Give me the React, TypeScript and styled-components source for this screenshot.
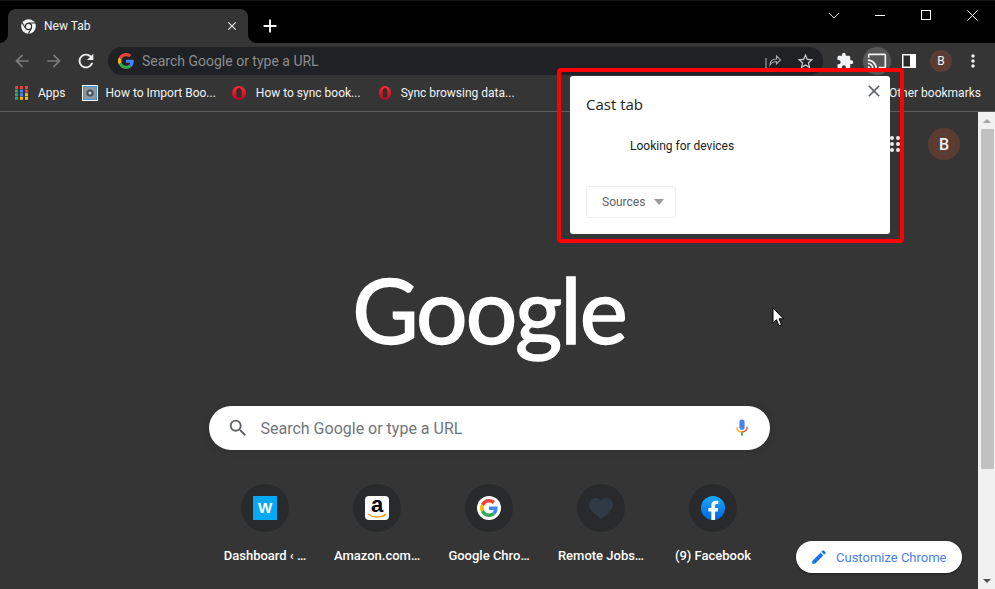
import React from "react";
import styled, { createGlobalStyle } from "styled-components";
import { MdArrowBack, MdArrowForward, MdRefresh, MdClose, MdExtension, MdCast, MdStarBorder, MdMoreVert, MdSearch, MdEdit, MdAdd } from "react-icons/md";

const Global = createGlobalStyle`
  html, body { margin: 0; padding: 0; background: #353535; }
  * { box-sizing: border-box; }
`;
const Shell = styled.div`
  position: relative; width: 995px; height: 589px; overflow: hidden;
  display: flex; flex-direction: column; background: #353535;
  font-family: Roboto, "Liberation Sans", sans-serif; color: #fff;
`;
const TitleBar = styled.div`
  height: 43px; flex: none; background: #000; border-top: 1px solid #141414;
  display: flex; align-items: flex-end; padding-left: 8px;
`;
const Tab = styled.div`
  position: relative; width: 240px; height: 34px; background: #353535;
  border-radius: 8px 8px 0 0; display: flex; align-items: center;
  padding: 0 9px 0 13px; gap: 8px;
  &::before, &::after { content: ""; position: absolute; bottom: 0; width: 8px; height: 8px; }
  &::before { left: -8px; background: radial-gradient(circle at 0 0, #000 7.5px, #353535 8px); }
  &::after { right: -8px; background: radial-gradient(circle at 100% 0, #000 7.5px, #353535 8px); }
`;
const TabTitle = styled.span`
  flex: 1; font: 12px Roboto, sans-serif; color: #f1f3f4;
`;
const NewTab = styled.div`
  margin-left: 8px; height: 34px; width: 28px; display: flex; align-items: center; justify-content: center; color: #fff;
`;
const WinControls = styled.div`
  margin-left: auto; align-self: flex-start; display: flex; color: #fff; padding-top: 6px;
`;
const WinBtn = styled.div`
  width: 46px; height: 16px; display: flex; align-items: center; justify-content: center;
`;
const Toolbar = styled.div`
  height: 36px; flex: none; display: flex; align-items: center; padding: 0 6px; background: #353535;
`;
const NavBtn = styled.div<{ $dim?: boolean }>`
  width: 32px; height: 28px; display: flex; align-items: center; justify-content: center;
  color: ${p => (p.$dim ? "#7b7c7d" : "#f1f3f4")};
`;
const Omnibox = styled.div`
  flex: 1; height: 28px; margin: 0 6px; background: #202124; border-radius: 14px;
  display: flex; align-items: center; padding: 0 2px 0 10px; gap: 8px;
`;
const OmniText = styled.span`
  flex: 1; font-size: 14px; color: #8b8c8e;
`;
const OmniIcon = styled.div`
  width: 32px; height: 28px; display: flex; align-items: center; justify-content: center; color: #c8c9ca; margin-left: -8px;
`;
const ToolIcon = styled.div<{ $active?: boolean }>`
  width: 32px; height: 28px; display: flex; align-items: center; justify-content: center; position: relative; color: #f1f3f4;
  &::before {
    content: ""; position: absolute; left: 2px; top: 0; width: 28px; height: 28px; border-radius: 50%;
    background: ${p => (p.$active ? "#565656" : "transparent")};
  }
  & > * { position: relative; }
`;
const MiniAvatar = styled.div`
  width: 22px; height: 22px; border-radius: 50%; background: #5c3d33; color: #f1f3f4;
  font-size: 12px; font-family: Roboto, sans-serif; display: flex; align-items: center; justify-content: center;
`;
const Bookmarks = styled.div`
  height: 33px; flex: none; display: flex; align-items: center; padding: 0 14px 4px 15px; gap: 16px;
  border-bottom: 1px solid #5e5e5e; background: #353535;
`;
const Bookmark = styled.div<{ $end?: boolean; $gap?: number }>`
  display: flex; align-items: center; gap: ${p => p.$gap ?? 8}px; font: 12px Roboto, sans-serif; color: #f1f3f4; white-space: nowrap;
  ${p => p.$end && "margin-left: auto;"}
`;
const Body = styled.div`
  flex: 1; display: flex; min-height: 0;
`;
const Page = styled.div`
  flex: 1; display: flex; flex-direction: column; align-items: center; position: relative; background: #353535;
`;
const TopRow = styled.div`
  align-self: stretch; height: 64px; padding: 16px 18px 0 0; display: flex; justify-content: flex-end; align-items: flex-start; gap: 28px;
`;
const GridIcon = styled.div`
  margin-top: 8px;
  width: 16px; height: 16px; display: grid; grid-template-columns: repeat(3, 4px); grid-auto-rows: 4px; gap: 2px;
  & > i { background: #e8eaed; border-radius: 50%; }
`;
const Avatar = styled.div`
  width: 32px; height: 32px; border-radius: 50%; background: #5c3d33; color: #f1f3f4;
  font: 500 16px Roboto, sans-serif; display: flex; align-items: center; justify-content: center;
`;
const Logo = styled.div`
  margin-top: 86px; height: 113px; font: 400 91px/94px Lato, sans-serif; letter-spacing: -2px; color: #fff;
  -webkit-text-stroke: 1.5px #fff;
`;
const SearchBox = styled.div`
  margin-top: 31px; width: 561px; height: 44px; background: #fff; border-radius: 22px; flex: none;
  display: flex; align-items: center; padding: 0 22px 0 18px; gap: 12px;
  color: #5f6368; box-shadow: 0 1px 6px rgba(32,33,36,.28);
`;
const SearchText = styled.span`
  flex: 1; font-size: 16px; color: #70757a;
`;
const Shortcuts = styled.div`
  margin-top: 34px; display: flex;
`;
const Tile = styled.div`
  width: 112px; display: flex; flex-direction: column; align-items: center;
`;
const TileCircle = styled.div`
  width: 48px; height: 48px; border-radius: 50%; background: #292a2b; display: flex; align-items: center; justify-content: center;
`;
const TileLabel = styled.div`
  margin-top: 15px; font: 500 13px/18px Roboto, sans-serif; color: #fff; text-align: center; white-space: nowrap;
`;
const WIcon = styled.div`
  width: 24px; height: 24px; background: #03a9f4; color: #fff; font: 700 15px/24px "Liberation Sans", sans-serif; text-align: center;
`;
const AmazonIcon = styled.div`
  width: 24px; height: 24px; background: #fff; border-radius: 4px; position: relative; color: #000;
  font: 700 22px/18px "Liberation Sans", sans-serif; text-align: center;
  & > svg { position: absolute; left: 2px; bottom: 1px; }
`;
const GIconWrap = styled.div`
  width: 24px; height: 24px; background: #fff; border-radius: 50%; display: flex; align-items: center; justify-content: center;
`;
const Customize = styled.div`
  position: absolute; left: 796px; top: 541px; width: 166px; height: 32px; border-radius: 16px; background: #fff;
  box-shadow: 0 1px 3px rgba(0,0,0,.4); display: flex; align-items: center; padding-left: 14px; gap: 8px;
  font: 400 13px Roboto, sans-serif; color: #4a7ff0;
  & > svg { color: #1a73e8; }
`;
const Scrollbar = styled.div`
  width: 17px; flex: none; background: #f1f1f1; display: flex; flex-direction: column; align-items: center;
`;
const ScrollArrow = styled.div<{ $down?: boolean }>`
  height: 17px; flex: none; display: flex; align-items: center; justify-content: center;
  &::after { content: ""; border-left: 4px solid transparent; border-right: 4px solid transparent;
    ${p => (p.$down ? "border-top: 4px solid #505050;" : "border-bottom: 4px solid #a3a3a3;")} }
`;
const ScrollThumb = styled.div`
  width: 13px; margin-left: 1px; height: 340px; background: #c1c1c1; flex: none;
`;
const ScrollSpace = styled.div`
  flex: 1;
`;
const Highlight = styled.div`
  position: absolute; left: 557px; top: 68px; width: 347px; height: 175px; border: 4px solid #fe0000; border-radius: 4px; pointer-events: none;
`;
const Popup = styled.div`
  position: absolute; left: 570px; top: 76px; width: 320px; height: 158px; background: #fff; border-radius: 3px;
  padding: 0 16px; display: flex; flex-direction: column; color: #202124;
`;
const PopupClose = styled.div`
  position: absolute; right: 6px; top: 5px; color: #5f6368; display: flex;
`;
const PopupTitle = styled.div`
  margin-top: 19px; font: 15px/18px "Open Sans", sans-serif; color: #202124;
`;
const PopupStatus = styled.div`
  margin-top: 25px; padding-left: 44px; font: 12px/16px Roboto, sans-serif; color: #202124;
`;
const SourcesBtn = styled.div`
  margin-top: 32px; width: 90px; height: 32px; border: 1px solid #eeeeee; border-radius: 3px;
  display: flex; align-items: center; padding-left: 15px; gap: 9px; font: 12px Roboto, sans-serif; color: #5f6368;
  &::after { content: ""; border-left: 5px solid transparent; border-right: 5px solid transparent; border-top: 6px solid #9a9a9a; }
`;
const Cursor = styled.svg`
  position: absolute; left: 772px; top: 307px;
`;

const GoogleG = ({ size }: { size: number }) => (
  <svg width={size} height={size} viewBox="0 0 48 48">
    <path fill="#EA4335" d="M24 9.5c3.54 0 6.71 1.22 9.21 3.6l6.85-6.85C35.9 2.38 30.47 0 24 0 14.62 0 6.51 5.38 2.56 13.22l7.98 6.19C12.43 13.72 17.74 9.5 24 9.5z" />
    <path fill="#4285F4" d="M46.98 24.55c0-1.57-.15-3.09-.38-4.55H24v9.02h12.94c-.58 2.96-2.26 5.48-4.78 7.18l7.73 6c4.51-4.18 7.09-10.36 7.09-17.65z" />
    <path fill="#FBBC05" d="M10.53 28.59c-.48-1.45-.76-2.99-.76-4.59s.27-3.14.76-4.59l-7.98-6.19C.92 16.46 0 20.12 0 24c0 3.88.92 7.54 2.56 10.78l7.97-6.19z" />
    <path fill="#34A853" d="M24 48c6.48 0 11.93-2.13 15.89-5.81l-7.73-6c-2.15 1.45-4.92 2.3-8.16 2.3-6.26 0-11.57-4.22-13.47-9.91l-7.98 6.19C6.51 42.62 14.62 48 24 48z" />
  </svg>
);
const Opera = ({ narrow }: { narrow?: boolean }) => (
  <svg width="14" height="14" viewBox="0 0 14 14">
    <defs>
      <linearGradient id="opera" x1="0" y1="0" x2="0" y2="1">
        <stop offset="0" stopColor="#ff2a38" />
        <stop offset="1" stopColor="#b00c1c" />
      </linearGradient>
    </defs>
    <ellipse cx={narrow ? 8 : 7} cy="7" rx={narrow ? 6 : 7} ry="7" fill="url(#opera)" />
    <ellipse cx={narrow ? 8 : 7} cy="7" rx={narrow ? 2.4 : 2.8} ry="5" fill="#3a2a2c" />
  </svg>
);
const ChromeIcon = () => (
  <svg width="15" height="15" viewBox="0 0 16 16">
    <circle cx="8" cy="8" r="7.8" fill="#f6f7f8" />
    <circle cx="8" cy="8" r="3.9" fill="#2a2a2a" />
    <circle cx="8" cy="8" r="2.7" fill="#f6f7f8" />
    <path d="M8 4.300H14.800M4.800 9.900L1.300 4M11.200 9.900L7.700 15.700" stroke="#2a2a2a" strokeWidth="1.100" fill="none" />
  </svg>
);
const AppsGrid = () => (
  <svg width="13" height="14" viewBox="0 0 13 14">
    {[
      ["#ea4335", "#ea4335", "#ea4335"], ["#34a853", "#4285f4", "#ea4335"],
      ["#34a853", "#4285f4", "#fbbc05"], ["#34a853", "#fbbc05", "#fbbc05"],
    ].map((r, y) => r.map((c, x) => <rect key={`${x}${y}`} x={x * 5} y={y * 3.6} width="3" height="3" fill={c} />))}
  </svg>
);
const ImportIcon = () => (
  <svg width="16" height="16" viewBox="0 0 16 16">
    <rect width="16" height="16" fill="#f4f6f8" />
    <rect x="1.500" y="1.500" width="13" height="13" fill="#8f969e" stroke="#4a93cf" />
    <circle cx="8" cy="8" r="3.600" fill="#4c5157" />
    <circle cx="8" cy="8" r="1.500" fill="#d5d8dc" />
  </svg>
);
const ShareIcon = () => (
  <svg width="16" height="16" viewBox="0 0 16 16" fill="none" stroke="#a9aaab" strokeWidth="1.100">
    <path d="M1 5v10" />
    <path d="M1 15h1" />
    <path d="M5 12c0-4 2.500-6 6.500-6V2.800L15.500 7l-4 4V8.500c-3 0-5 1-6.500 3.500z" />
  </svg>
);
const SidePanel = () => (
  <svg width="14" height="14" viewBox="0 0 14 14">
    <rect width="14" height="14" fill="#fff" />
    <rect x="1.500" y="1.500" width="6.500" height="11" fill="#2b2b2b" />
  </svg>
);
const Mic = () => (
  <svg width="12" height="18" viewBox="0 0 14 20" fill="none">
    <rect x="4" y="0" width="6" height="12" rx="3" fill="#4285f4" />
    <path d="M1 9c0 3.500 2.600 5.600 6 5.600" stroke="#fbbc05" strokeWidth="1.600" />
    <path d="M13 8.600c0 3.600-2.600 6-6 6" stroke="#ea4335" strokeWidth="1.600" />
    <path d="M7 15v4" stroke="#34a853" strokeWidth="2" />
  </svg>
);
const Heart = () => (
  <svg width="24" height="21" viewBox="0 0 24 21">
    <path fill="#303a46" d="M12 21C6 16.500 0 12 0 6.500 0 3 2.800 0 6.500 0 9 0 11 1.200 12 3c1-1.800 3-3 5.500-3C21.200 0 24 3 24 6.500 24 12 18 16.500 12 21z" />
  </svg>
);
const FacebookLogo = () => (
  <svg width="24" height="24" viewBox="0 0 24 24">
    <defs>
      <linearGradient id="fb" x1="0" y1="0" x2="0" y2="1">
        <stop offset="0" stopColor="#18acfe" />
        <stop offset="1" stopColor="#0163e0" />
      </linearGradient>
    </defs>
    <circle cx="12" cy="12" r="12" fill="url(#fb)" />
    <path fill="#fff" d="M16.700 15.500l.5-3.500h-3.300V9.800c0-.9.5-1.900 1.900-1.900h1.500V5s-1.300-.2-2.600-.2c-2.700 0-4.400 1.600-4.400 4.600V12H7.300v3.500h3v8.400c.6.1 1.200.1 1.900.1s1.300 0 1.900-.1v-8.400z" />
  </svg>
);

const tiles = [
  { label: "Dashboard ‹ …", icon: <WIcon>W</WIcon> },
  { label: "Amazon.com…", icon: <AmazonIcon>a<svg width="20" height="6" viewBox="0 0 20 6"><path d="M1 1c5 4 12 4 18 .5" stroke="#f79a1e" strokeWidth="1.600" fill="none" /></svg></AmazonIcon> },
  { label: "Google Chro…", icon: <GIconWrap><GoogleG size={18} /></GIconWrap> },
  { label: "Remote Jobs…", icon: <Heart /> },
  { label: "(9) Facebook", icon: <FacebookLogo /> },
];

export default function App() {
  return (
    <Shell>
      <Global />
      <TitleBar>
        <Tab>
          <ChromeIcon />
          <TabTitle>New Tab</TabTitle>
          <MdClose size={14} color="#e8eaed" />
        </Tab>
        <NewTab><MdAdd size={22} /></NewTab>
        <WinControls>
          <WinBtn><svg width="12" height="7" viewBox="0 0 12 7" fill="none" stroke="#ddd"><path d="M1 1l5 5 5-5" /></svg></WinBtn>
          <WinBtn><svg width="10" height="1" viewBox="0 0 10 1"><rect width="10" height="1" fill="#fff" /></svg></WinBtn>
          <WinBtn><svg width="10" height="10" viewBox="0 0 10 10" fill="none" stroke="#fff"><rect x=".5" y=".5" width="9" height="9" /></svg></WinBtn>
          <WinBtn><svg width="11" height="11" viewBox="0 0 11 11" fill="none" stroke="#fff"><path d="M.5.5l10 10M10.500.5l-10 10" /></svg></WinBtn>
        </WinControls>
      </TitleBar>
      <Toolbar>
        <NavBtn $dim><MdArrowBack size={20} /></NavBtn>
        <NavBtn $dim><MdArrowForward size={20} /></NavBtn>
        <NavBtn><MdRefresh size={22} /></NavBtn>
        <Omnibox>
          <GoogleG size={16} />
          <OmniText>Search Google or type a URL</OmniText>
          <OmniIcon><ShareIcon /></OmniIcon>
          <OmniIcon><MdStarBorder size={19} /></OmniIcon>
        </Omnibox>
        <ToolIcon><MdExtension size={18} /></ToolIcon>
        <ToolIcon $active><MdCast size={20} /></ToolIcon>
        <ToolIcon><SidePanel /></ToolIcon>
        <ToolIcon><MiniAvatar>B</MiniAvatar></ToolIcon>
        <ToolIcon><MdMoreVert size={20} /></ToolIcon>
      </Toolbar>
      <Bookmarks>
        <Bookmark $gap={10}><AppsGrid />Apps</Bookmark>
        <Bookmark><ImportIcon />How to Import Boo...</Bookmark>
        <Bookmark $gap={10}><Opera />How to sync book...</Bookmark>
        <Bookmark $gap={10}><Opera narrow />Sync browsing data...</Bookmark>
        <Bookmark $end>Other bookmarks</Bookmark>
      </Bookmarks>
      <Body>
        <Page>
          <TopRow>
            <GridIcon>{Array.from({ length: 9 }, (_, i) => <i key={i} />)}</GridIcon>
            <Avatar>B</Avatar>
          </TopRow>
          <Logo>Google</Logo>
          <SearchBox>
            <MdSearch size={22} />
            <SearchText>Search Google or type a URL</SearchText>
            <Mic />
          </SearchBox>
          <Shortcuts>
            {tiles.map(t => (
              <Tile key={t.label}>
                <TileCircle>{t.icon}</TileCircle>
                <TileLabel>{t.label}</TileLabel>
              </Tile>
            ))}
          </Shortcuts>
        </Page>
        <Scrollbar>
          <ScrollArrow />
          <ScrollThumb />
          <ScrollSpace />
          <ScrollArrow $down />
        </Scrollbar>
      </Body>
      <Customize><MdEdit size={18} />Customize Chrome</Customize>
      <Highlight />
      <Popup>
        <PopupClose><MdClose size={20} /></PopupClose>
        <PopupTitle>Cast tab</PopupTitle>
        <PopupStatus>Looking for devices</PopupStatus>
        <SourcesBtn>Sources</SourcesBtn>
      </Popup>
      <Cursor width="12" height="20" viewBox="0 0 12 20">
        <path d="M1 1v15l3.500-3.300 2.500 6 2.500-1-2.500-5.900h4.500z" fill="#fff" stroke="#000" />
      </Cursor>
    </Shell>
  );
}
